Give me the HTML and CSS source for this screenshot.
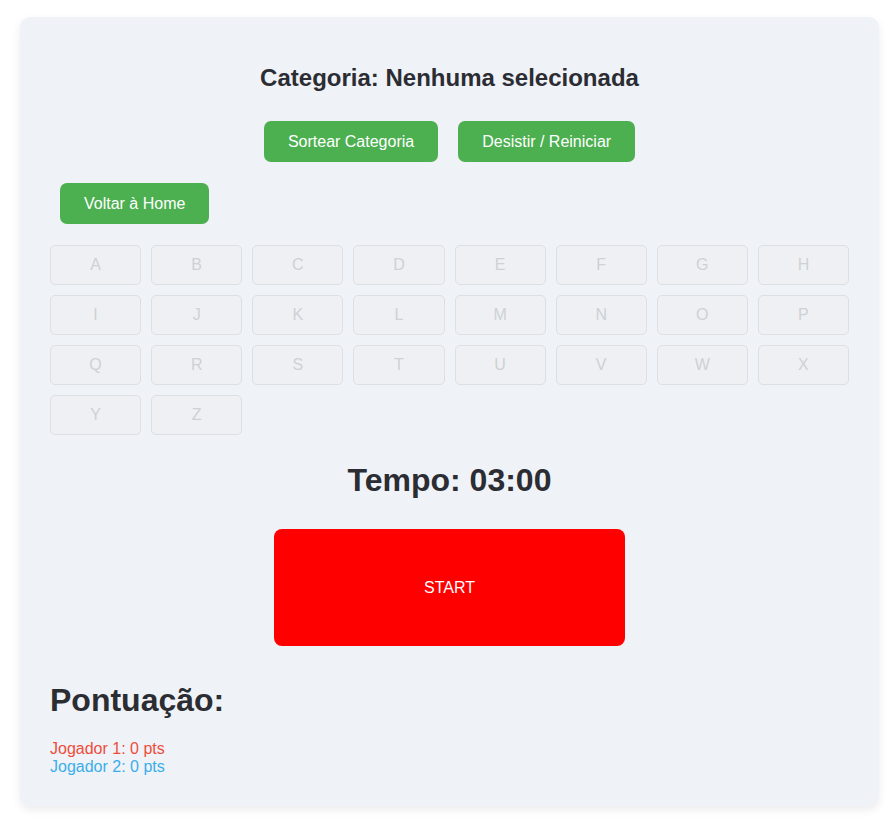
FILE: index.html
```html
<!DOCTYPE html>
<html lang="pt">
<head>
<meta charset="utf-8">
<title>Stop</title>
<link rel="stylesheet" href="styles.css">
</head>
<body>
<div class="card">
  <h2 class="category">Categoria: Nenhuma selecionada</h2>
  <div class="actions">
    <button class="btn">Sortear Categoria</button>
    <button class="btn">Desistir / Reiniciar</button>
  </div>
  <div class="home-row">
    <button class="btn">Voltar à Home</button>
  </div>
  <div class="letters">
    <button class="letter" disabled>A</button>
    <button class="letter" disabled>B</button>
    <button class="letter" disabled>C</button>
    <button class="letter" disabled>D</button>
    <button class="letter" disabled>E</button>
    <button class="letter" disabled>F</button>
    <button class="letter" disabled>G</button>
    <button class="letter" disabled>H</button>
    <button class="letter" disabled>I</button>
    <button class="letter" disabled>J</button>
    <button class="letter" disabled>K</button>
    <button class="letter" disabled>L</button>
    <button class="letter" disabled>M</button>
    <button class="letter" disabled>N</button>
    <button class="letter" disabled>O</button>
    <button class="letter" disabled>P</button>
    <button class="letter" disabled>Q</button>
    <button class="letter" disabled>R</button>
    <button class="letter" disabled>S</button>
    <button class="letter" disabled>T</button>
    <button class="letter" disabled>U</button>
    <button class="letter" disabled>V</button>
    <button class="letter" disabled>W</button>
    <button class="letter" disabled>X</button>
    <button class="letter" disabled>Y</button>
    <button class="letter" disabled>Z</button>
  </div>
  <h1 class="timer">Tempo: 03:00</h1>
  <div class="start-row">
    <button class="start">START</button>
  </div>
  <h1 class="score-title">Pontuação:</h1>
  <div class="scores">
    <div class="p1">Jogador 1: 0 pts</div>
    <div class="p2">Jogador 2: 0 pts</div>
  </div>
</div>
</body>
</html>
```
FILE: styles.css
```css
* { box-sizing: border-box; }

body {
  margin: 0;
  padding: 17px 10px 16px 20px;
  background: #ffffff;
  font-family: "Liberation Sans", Arial, sans-serif;
  color: #2b2d33;
}

.card {
  width: 859px;
  background: #eff2f7;
  border-radius: 10px;
  box-shadow: 0 4px 10px rgba(0, 0, 0, 0.08);
  padding: 47px 30px 30px;
}

.category {
  margin: 0;
  font-size: 24px;
  line-height: 28px;
  font-weight: bold;
  text-align: center;
}

.actions {
  display: flex;
  justify-content: center;
  gap: 20px;
  margin-top: 29px;
}

.btn {
  font-family: "Liberation Sans", Arial, sans-serif;
  font-size: 16px;
  line-height: 19px;
  padding: 11px 24px;
  background: #4caf50;
  color: #ffffff;
  border: none;
  border-radius: 7px;
}

.home-row {
  margin-top: 21px;
  padding-left: 10px;
}

.letters {
  margin-top: 21px;
  display: grid;
  grid-template-columns: repeat(8, 1fr);
  gap: 10px;
}

.letter {
  height: 40px;
  font-family: "Liberation Sans", Arial, sans-serif;
  font-size: 16px;
  color: #cfd1d4;
  background: #eef0f3;
  border: 1px solid #dcdfe3;
  border-radius: 5px;
}

.timer {
  margin: 27px 0 0;
  font-size: 32px;
  line-height: 37px;
  text-align: center;
}

.start-row {
  display: flex;
  justify-content: center;
  margin-top: 30px;
}

.start {
  width: 351px;
  height: 117px;
  background: #ff0000;
  color: #ffffff;
  border: none;
  border-radius: 8px;
  font-family: "Liberation Sans", Arial, sans-serif;
  font-size: 16px;
}

.score-title {
  margin: 36px 0 0;
  font-size: 32px;
  line-height: 37px;
}

.scores {
  margin-top: 21px;
  font-size: 16px;
  line-height: 18px;
}

.p1 { color: #ee4c3a; }
.p2 { color: #3aaeea; }
```
